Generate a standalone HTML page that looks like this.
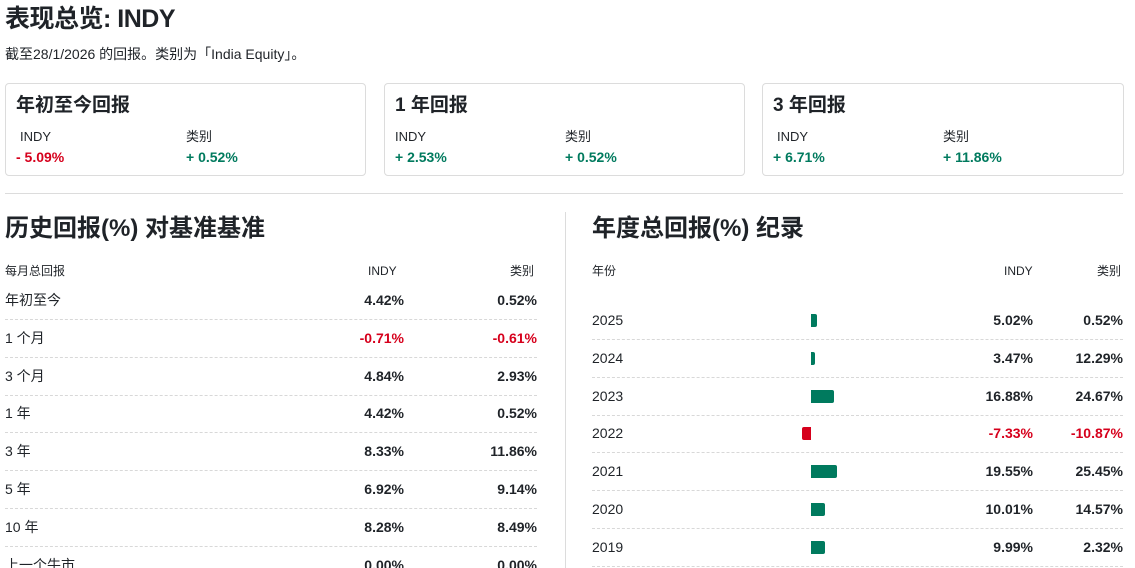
<!DOCTYPE html>
<html><head><meta charset="utf-8"><style>
*{margin:0;padding:0;box-sizing:border-box}
html,body{width:1135px;height:568px;overflow:hidden}
body{background:#fff;font-family:"Liberation Sans","Noto Sans CJK SC",sans-serif;color:#1f2328;position:relative}
.a{position:absolute;white-space:nowrap;line-height:18px}
h1{position:absolute;left:5px;top:4px;font-size:25px;line-height:30px;font-weight:700;letter-spacing:-0.5px}
.sub{left:5px;top:45px;font-size:14px}
.card{position:absolute;top:83px;height:93px;border:1px solid #dcdcdc;border-radius:4px}
.card .t{position:absolute;left:10px;top:10px;font-size:19px;line-height:24px;font-weight:700}
.card .l{position:absolute;top:44px;font-size:13px;line-height:17px}
.card .v{position:absolute;top:64px;font-size:14px;line-height:18px;font-weight:700}
.red{color:#d6001c}.grn{color:#007a5e}
.hr{position:absolute;left:5px;top:193px;width:1118px;height:1px;background:#dcdcdc}
.vr{position:absolute;left:565px;top:212px;width:1px;height:356px;background:#dcdcdc}
h2{position:absolute;font-size:24px;line-height:30px;font-weight:700;top:214px}
.hd{font-size:12px;top:262px}
.row{position:absolute;height:1px;border-top:1px dashed #d8d8d8}
.c{font-size:14px}
.n{font-size:14px;font-weight:700;text-align:right}
.bar{position:absolute;height:13px;background:#007a5e;border-radius:0 2px 2px 0}
</style></head><body>
<h1>表现总览: INDY</h1>
<div class="a sub">截至28/1/2026 的回报。类别为「India Equity」。</div>

<div class="card" style="left:5px;width:361px"><div class="t">年初至今回报</div><div class="l" style="left:14px">INDY</div><div class="l" style="left:180px">类别</div><div class="v red" style="left:10px">- 5.09%</div><div class="v grn" style="left:180px">+ 0.52%</div></div>
<div class="card" style="left:384px;width:361px"><div class="t">1 年回报</div><div class="l" style="left:10px">INDY</div><div class="l" style="left:180px">类别</div><div class="v grn" style="left:10px">+ 2.53%</div><div class="v grn" style="left:180px">+ 0.52%</div></div>
<div class="card" style="left:762px;width:362px"><div class="t">3 年回报</div><div class="l" style="left:14px">INDY</div><div class="l" style="left:180px">类别</div><div class="v grn" style="left:10px">+ 6.71%</div><div class="v grn" style="left:180px">+ 11.86%</div></div>

<div class="hr"></div><div class="vr"></div>
<h2 style="left:5px">历史回报(%) 对基准基准</h2>
<h2 style="left:592px">年度总回报(%) 纪录</h2>

<div class="a hd" style="left:5px">每月总回报</div>
<div class="a hd" style="left:368px">INDY</div>
<div class="a hd" style="left:510px">类别</div>

<div class="a hd" style="left:592px">年份</div>
<div class="a hd" style="left:1004px">INDY</div>
<div class="a hd" style="left:1097px">类别</div>

<div id="L"></div>
<script>
var L=[["年初至今","4.42%","0.52%",0],["1 个月","-0.71%","-0.61%",1],["3 个月","4.84%","2.93%",0],["1 年","4.42%","0.52%",0],["3 年","8.33%","11.86%",0],["5 年","6.92%","9.14%",0],["10 年","8.28%","8.49%",0],["上一个牛市","0.00%","0.00%",0]];
var h="";
L.forEach(function(r,i){var y=291+i*37.8;var cl=r[3]?" red":"";
h+='<div class="a c" style="left:5px;top:'+y+'px">'+r[0]+'</div>';
h+='<div class="a n'+cl+'" style="right:731px;top:'+y+'px">'+r[1]+'</div>';
h+='<div class="a n'+cl+'" style="right:598px;top:'+y+'px">'+r[2]+'</div>';
h+='<div class="row" style="left:5px;width:532px;top:'+(y+28)+'px"></div>';});
var R=[["2025","5.02%","0.52%",6],["2024","3.47%","12.29%",4],["2023","16.88%","24.67%",23],["2022","-7.33%","-10.87%",-9],["2021","19.55%","25.45%",26],["2020","10.01%","14.57%",14],["2019","9.99%","2.32%",14]];
R.forEach(function(r,i){var y=311+i*37.8;var cl=r[3]<0?" red":"";
h+='<div class="a c" style="left:592px;top:'+y+'px">'+r[0]+'</div>';
h+='<div class="a n'+cl+'" style="right:102px;top:'+y+'px">'+r[1]+'</div>';
h+='<div class="a n'+cl+'" style="right:12px;top:'+y+'px">'+r[2]+'</div>';
if(r[3]>0)h+='<div class="bar" style="left:811px;width:'+r[3]+'px;top:'+(y+3)+'px"></div>';
else h+='<div class="bar" style="left:'+(811+r[3])+'px;width:'+(-r[3])+'px;top:'+(y+3)+'px;background:#d6001c;border-radius:2px 0 0 2px"></div>';
h+='<div class="row" style="left:592px;width:531px;top:'+(y+28)+'px"></div>';});
document.getElementById("L").innerHTML=h;
</script>
</body></html>
